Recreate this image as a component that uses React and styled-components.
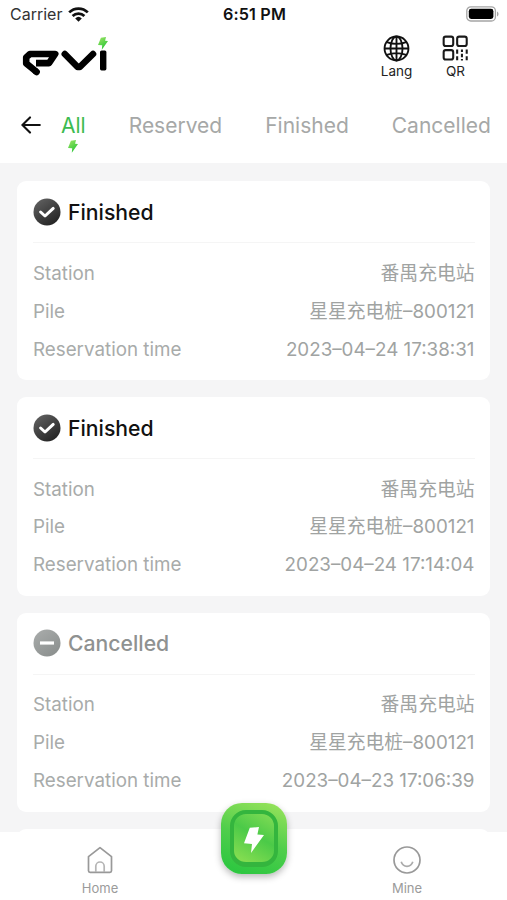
import styled, { createGlobalStyle } from "styled-components";

const records = [
  {
    status: "Finished",
    station: "番禺充电站",
    pile: "星星充电桩–800121",
    time: "2023–04–24 17:38:31",
  },
  {
    status: "Finished",
    station: "番禺充电站",
    pile: "星星充电桩–800121",
    time: "2023–04–24 17:14:04",
  },
  {
    status: "Cancelled",
    station: "番禺充电站",
    pile: "星星充电桩–800121",
    time: "2023–04–23 17:06:39",
  },
];

const tabs = ["All", "Reserved", "Finished", "Cancelled"];

function Bolt({ size, id }) {
  return (
    <svg width={size} height={(size * 14) / 11} viewBox="0 0 11 14">
      <defs>
        <linearGradient id={id} x1="0" y1="0" x2="0.6" y2="1">
          <stop offset="0" stopColor="#a4e668" />
          <stop offset="1" stopColor="#25c534" />
        </linearGradient>
      </defs>
      <path d="M3.2.8 8.8 0 7.8 4 11 4.4 4.2 14 4.6 9.2 0 8.8Z" fill={`url(#${id})`} />
    </svg>
  );
}

function Logo() {
  return (
    <svg width="86" height="36" viewBox="0 0 86 36">
      <g fill="none" stroke="#000" strokeWidth="6.6" strokeLinejoin="round">
        <path d="M14 21.1H27L33.2 12H8L4.2 15.4V21.4L14.4 29.8" />
        <path d="M14 29.6 14.6 30" strokeLinecap="round" />
        <path d="M42.8 12 55.6 25H57.8L71 12" strokeLinecap="round" />
      </g>
      <rect x="78" y="8.4" width="6.4" height="20" rx="1.6" />
    </svg>
  );
}

function GlobeIcon() {
  return (
    <svg width="27" height="27" viewBox="0 0 26 26" fill="none" stroke="#111" strokeWidth="1.8">
      <circle cx="13" cy="13" r="11.5" />
      <ellipse cx="13" cy="13" rx="5.8" ry="11.5" />
      <path d="M13 1.5v23M1.5 13h23M3.6 6.8c5.5 2.1 13.3 2.1 18.8 0M3.6 19.2c5.5-2.1 13.3-2.1 18.8 0" />
    </svg>
  );
}

function QrIcon() {
  return (
    <svg width="27" height="27" viewBox="0 0 26 26" fill="none" stroke="#1a1a1a" strokeWidth="2">
      <rect x="1.6" y="1.6" width="9.2" height="9" rx="2" />
      <rect x="14.6" y="1.6" width="9.2" height="9" rx="2" />
      <rect x="1.6" y="14.6" width="9.2" height="9" rx="2" />
      <path d="M14.6 14v4M14.6 20.4v4M19.2 14v2.4M19.2 18v3.4M19.2 23v1.6M23.8 14v4M23.8 20.4v4" />
    </svg>
  );
}

function StatusIcon({ status }) {
  const done = status === "Finished";
  const id = done ? "done" : "cancel";
  return (
    <svg width="28" height="28" viewBox="0 0 28 28">
      <defs>
        <linearGradient id={id} x1="0" y1="0" x2="0.7" y2="1">
          <stop offset="0" stopColor={done ? "#666" : "#aaadac"} />
          <stop offset="1" stopColor={done ? "#242424" : "#8c908f"} />
        </linearGradient>
      </defs>
      <circle cx="14" cy="14" r="13.5" fill={`url(#${id})`} />
      {done ? (
        <path
          d="M7.6 14 12 18 20.2 10.4"
          fill="none"
          stroke="#fff"
          strokeWidth="3"
          strokeLinecap="round"
          strokeLinejoin="round"
        />
      ) : (
        <path d="M7 14h14" stroke="#fff" strokeWidth="3.2" />
      )}
    </svg>
  );
}

function App() {
  return (
    <Screen>
      <GlobalStyle />
      <StatusBar>
        <Carrier>
          <span>Carrier</span>
          <svg width="21" height="15" viewBox="0 0 21 15">
            <g fill="none" stroke="#111" strokeWidth="2.7">
              <path d="M1.2 5.4a13.2 13.2 0 0 1 18.6 0" />
              <path d="M4.6 9a8.4 8.4 0 0 1 11.8 0" />
            </g>
            <path d="M7.2 11.4a4.8 4.8 0 0 1 6.6 0L10.5 14.8Z" fill="#111" />
          </svg>
        </Carrier>
        <Clock>6:51 PM</Clock>
        <Battery>
          <svg width="33" height="16" viewBox="0 0 33 16">
            <rect x=".8" y=".8" width="28.6" height="14.2" rx="4" fill="none" stroke="#a5a5a5" strokeWidth="1.3" />
            <rect x="2.8" y="2.8" width="24.6" height="10.2" rx="2.4" fill="#000" />
            <path d="M31 5.4v5c2-.8 2-4.2 0-5Z" fill="#a5a5a5" />
          </svg>
        </Battery>
      </StatusBar>
      <Header>
        <Brand>
          <Logo />
          <BrandBolt>
            <Bolt size={10} id="brand" />
          </BrandBolt>
        </Brand>
        <Action>
          <GlobeIcon />
          <span>Lang</span>
        </Action>
        <Action>
          <QrIcon />
          <span>QR</span>
        </Action>
      </Header>
      <Tabs>
        <Back>
          <svg width="20" height="18" viewBox="0 0 20 18" fill="none" stroke="#111" strokeWidth="2.1" strokeLinecap="round">
            <path d="M18.8 9H1.6M9 1.4 1.4 9 9 16.6" />
          </svg>
        </Back>
        {tabs.map((tab, i) => (
          <Tab key={tab} $active={i === 0}>
            {tab}
            {i === 0 && (
              <TabMark>
                <Bolt size={10} id="tab" />
              </TabMark>
            )}
          </Tab>
        ))}
      </Tabs>
      <List>
        {records.map((item) => (
          <Card key={item.time}>
            <CardTitle $status={item.status}>
              <StatusIcon status={item.status} />
              <span>{item.status}</span>
            </CardTitle>
            <Row>
              <Label>Station</Label>
              <Value>{item.station}</Value>
            </Row>
            <Row>
              <Label>Pile</Label>
              <Value>{item.pile}</Value>
            </Row>
            <Row>
              <Label>Reservation time</Label>
              <Value>{item.time}</Value>
            </Row>
          </Card>
        ))}
        <Card />
      </List>
      <TabBar>
        <NavItem>
          <svg width="26" height="28" viewBox="0 0 26 28" fill="none" stroke="#999" strokeWidth="1.7" strokeLinejoin="round">
            <path d="M1.5 10.6 13 1.6l11.5 9v14.2q0 1.6-1.6 1.6H3.1q-1.6 0-1.6-1.6Z" />
            <path d="M8.8 26v-5.8a4.2 4.2 0 0 1 8.4 0V26" stroke="#b5b5b5" />
          </svg>
          <span>Home</span>
        </NavItem>
        <NavItem>
          <svg width="28" height="28" viewBox="0 0 28 28" fill="none" stroke="#999" strokeWidth="1.7">
            <circle cx="14" cy="14" r="13" />
            <path d="M8.2 15.8c2 6 9.6 6 11.6 0" stroke="#aaa" />
          </svg>
          <span>Mine</span>
        </NavItem>
        <ChargeButton>
          <ChargeInner>
            <svg width="20" height="26" viewBox="0 0 20 26">
              <path d="M5.8.8 15 0 13.4 7.4 20 8 7 26 8 17 0 16.2Z" fill="#fff" />
            </svg>
          </ChargeInner>
        </ChargeButton>
      </TabBar>
    </Screen>
  );
}

export default App;

const GlobalStyle = createGlobalStyle`
  body {
    margin: 0;
    font-family: Inter, "Noto Sans CJK SC", sans-serif;
  }
  * {
    box-sizing: border-box;
  }
  svg {
    display: block;
    flex-shrink: 0;
  }
`;

const Screen = styled.div`
  display: flex;
  flex-direction: column;
  width: 507px;
  height: 900px;
  overflow: hidden;
  background: #fff;
`;

const StatusBar = styled.div`
  display: grid;
  grid-template-columns: 1fr auto 1fr;
  align-items: center;
  height: 30px;
  padding: 0 8px 2px 10px;
  font-size: 16px;
  color: #111;
`;

const Carrier = styled.div`
  display: flex;
  align-items: center;
  gap: 6px;
  color: #333;
`;

const Clock = styled.div`
  font-size: 16.2px;
  font-weight: 600;
  letter-spacing: 0.15px;
`;

const Battery = styled.div`
  justify-self: end;
`;

const Header = styled.div`
  display: flex;
  align-items: flex-start;
  height: 58px;
  padding: 5px 22px 0 22px;
`;

const Brand = styled.div`
  position: relative;
  margin-right: auto;
  padding-top: 7px;
`;

const BrandBolt = styled.div`
  position: absolute;
  top: 2px;
  right: 0;
`;

const Action = styled.div`
  display: flex;
  flex-direction: column;
  align-items: center;
  width: 59px;
  gap: 1px;
  font-size: 13.5px;
  line-height: 16px;
  color: #222;
`;

const Tabs = styled.div`
  display: flex;
  align-items: flex-start;
  height: 74.5px;
  padding: 24px 0 0 21px;
`;

const Back = styled.div`
  padding-top: 4px;
  margin-right: 20px;
`;

const Tab = styled.div`
  position: relative;
  font-size: 21px;
  font-weight: 400;
  line-height: 27px;
  color: ${(p) => (p.$active ? "#3cbb50" : "#a6a8a7")};
  & + & {
    margin-left: 43px;
  }
`;

const TabMark = styled.div`
  position: absolute;
  top: 28px;
  left: 7px;
`;

const List = styled.div`
  display: flex;
  flex-direction: column;
  flex: 1;
  gap: 17px;
  min-height: 0;
  overflow: hidden;
  padding: 18.8px 17px 0 17px;
  background: #f5f5f6;
`;

const Card = styled.div`
  flex-shrink: 0;
  height: 198.8px;
  padding: 0 15.5px 0 16px;
  border-radius: 9px;
  background: #fff;
`;

const CardTitle = styled.div`
  display: flex;
  align-items: center;
  gap: 7px;
  height: 62px;
  margin-bottom: 11.5px;
  border-bottom: 1px solid #f5f5f5;
  font-size: 21.2px;
  font-weight: 500;
  color: ${(p) => (p.$status === "Finished" ? "#111" : "#8f9291")};
`;

const Row = styled.div`
  display: flex;
  align-items: center;
  justify-content: space-between;
  height: 37.9px;
  font-size: 18.8px;
  font-weight: 400;
  line-height: 37.9px;
  white-space: nowrap;
`;

const Label = styled.span`
  color: #a8abaa;
`;

const Value = styled.span`
  color: #a0a3a2;
`;

const TabBar = styled.div`
  position: relative;
  display: flex;
  justify-content: space-between;
  height: 68px;
  padding: 14px 60px 0 60px;
  background: #fff;
`;

const NavItem = styled.div`
  display: flex;
  flex-direction: column;
  align-items: center;
  width: 80px;
  gap: 6px;
  font-size: 13px;
  line-height: 16px;
  color: #9b9b9b;
`;

const ChargeButton = styled.div`
  position: absolute;
  top: -29px;
  left: 221px;
  width: 66px;
  height: 71px;
  padding: 7px 9px;
  border-radius: 21px;
  background: linear-gradient(200deg, #95e25a 5%, #50ce4c 50%, #2fc741 90%);
  box-shadow: 0 3px 7px rgba(0, 0, 0, 0.28);
`;

const ChargeInner = styled.div`
  display: flex;
  align-items: center;
  justify-content: center;
  height: 57px;
  padding-top: 3px;
  border: 4px solid #34b53e;
  border-bottom-width: 5px;
  border-radius: 16px;
  background: linear-gradient(30deg, #8ee052, #4bca48 55%, #83dc55);
`;
